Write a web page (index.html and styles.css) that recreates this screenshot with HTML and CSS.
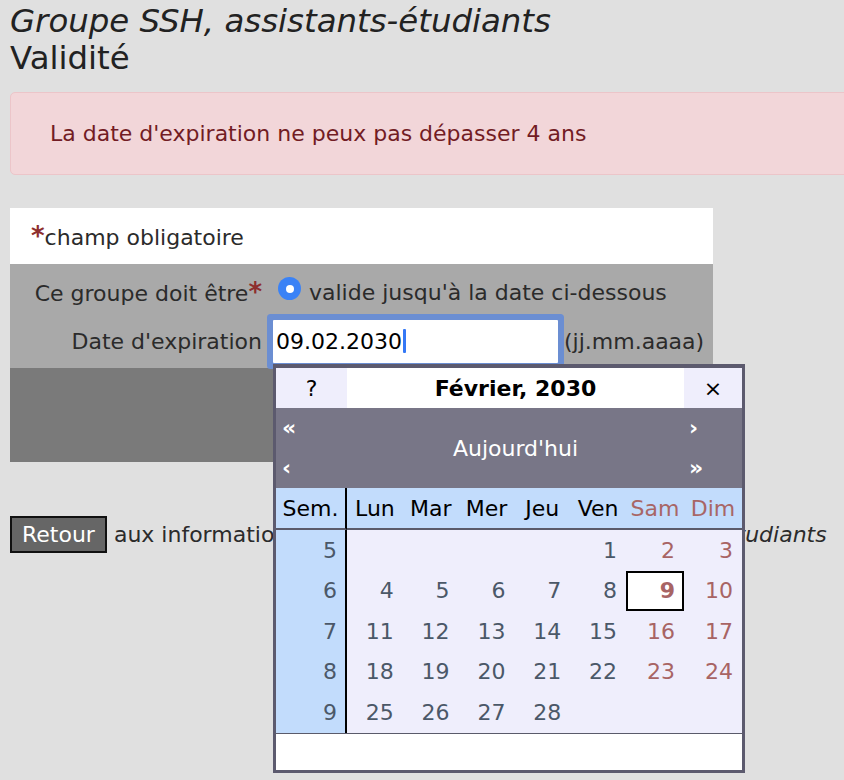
FILE: index.html
```html
<!DOCTYPE html>
<html lang="fr">
<head>
<meta charset="utf-8">
<title>Validité</title>
<link rel="stylesheet" href="styles.css">
</head>
<body>
<div class="page">
  <h1 class="title"><em>Groupe SSH, assistants-étudiants</em><br>Validité</h1>

  <div class="alert">La date d'expiration ne peux pas dépasser 4 ans</div>

  <div class="form">
    <div class="form-head"><span class="req">*</span>champ obligatoire</div>
    <div class="form-body">
      <div class="row row-1">
        <div class="label">Ce groupe doit être<span class="req">*</span></div>
        <div class="value"><span class="radio"></span>valide jusqu'à la date ci-dessous</div>
      </div>
      <div class="row row-2">
        <div class="label">Date d'expiration</div>
        <div class="value"><div class="input">09.02.2030<span class="caret"></span></div><span class="hint">(jj.mm.aaaa)</span></div>
      </div>
    </div>
    <div class="form-foot"></div>
  </div>

  <div class="back"><button class="btn">Retour</button> aux informations sur le groupe <em>Groupe SSH, assistants-étudiants</em></div>

  <div class="cal">
    <div class="c-help">?</div>
    <div class="c-title">Février, 2030</div>
    <div class="c-close">×</div>

    <div class="c-nav c-nav-l"><span>«</span><span>‹</span></div>
    <div class="c-todaybtn">Aujourd'hui</div>
    <div class="c-nav c-nav-r"><span>›</span><span>»</span></div>

    <div class="c-h c-wk">Sem.</div>
    <div class="c-h">Lun</div>
    <div class="c-h">Mar</div>
    <div class="c-h">Mer</div>
    <div class="c-h">Jeu</div>
    <div class="c-h">Ven</div>
    <div class="c-h we">Sam</div>
    <div class="c-h we">Dim</div>

    <div class="c-wn">5</div>
    <div class="c-d"></div><div class="c-d"></div><div class="c-d"></div><div class="c-d"></div>
    <div class="c-d">1</div><div class="c-d we">2</div><div class="c-d we">3</div>

    <div class="c-wn">6</div>
    <div class="c-d">4</div><div class="c-d">5</div><div class="c-d">6</div><div class="c-d">7</div>
    <div class="c-d">8</div><div class="c-d we today">9</div><div class="c-d we">10</div>

    <div class="c-wn">7</div>
    <div class="c-d">11</div><div class="c-d">12</div><div class="c-d">13</div><div class="c-d">14</div>
    <div class="c-d">15</div><div class="c-d we">16</div><div class="c-d we">17</div>

    <div class="c-wn">8</div>
    <div class="c-d">18</div><div class="c-d">19</div><div class="c-d">20</div><div class="c-d">21</div>
    <div class="c-d">22</div><div class="c-d we">23</div><div class="c-d we">24</div>

    <div class="c-wn">9</div>
    <div class="c-d">25</div><div class="c-d">26</div><div class="c-d">27</div><div class="c-d">28</div>
    <div class="c-d"></div><div class="c-d"></div><div class="c-d"></div>

    <div class="c-foot"></div>
  </div>
</div>
</body>
</html>
```

FILE: styles.css
```css
* { box-sizing: border-box; }

html, body {
  margin: 0;
  padding: 0;
  overflow: hidden;
}

body {
  background: #e0e0e0;
  font-family: "DejaVu Sans", Verdana, sans-serif;
  font-size: 22px;
  color: #2b2b2b;
}

.page {
  position: relative;
  padding: 3px 0 0 10px;
  min-height: 780px;
}

.title {
  margin: 0;
  font-size: 32.4px;
  line-height: 37px;
  font-weight: normal;
  color: #222;
}

.alert {
  margin: 15px -60px 0 0;
  height: 83px;
  display: flex;
  align-items: center;
  padding: 0 39px;
  background: #f2d6d9;
  border: 1px solid #ecc5c9;
  border-radius: 5px;
  color: #721c24;
  font-size: 22px;
}

.form {
  margin-top: 33px;
  width: 703px;
}

.form-head {
  background: #fff;
  height: 56px;
  padding: 15px 0 0 21px;
  line-height: 25px;
}

.req {
  color: #8e2e2e;
  font-weight: bold;
  font-size: 26px;
  line-height: 1;
}

.form-body { background: #a9a9a9; }

.row {
  display: grid;
  grid-template-columns: 252px 1fr;
  align-items: center;
}
.row-1 { height: 50px; padding-top: 7px; }
.row-2 { height: 54px; }

.label { text-align: right; }

.value {
  display: flex;
  align-items: center;
}

.radio {
  width: 23px;
  height: 23px;
  border-radius: 50%;
  background: #3a82f6;
  margin: 0 8px 8px 16px;
  display: flex;
  align-items: center;
  justify-content: center;
}
.radio::after {
  content: "";
  width: 8px;
  height: 8px;
  border-radius: 50%;
  background: #fff;
}

.input {
  margin-left: 11px;
  width: 285px;
  height: 43px;
  background: #fff;
  border-radius: 1px;
  box-shadow: 0 0 0 6px #6b8ed2;
  padding-left: 3px;
  display: flex;
  align-items: center;
  color: #000;
}

.caret {
  display: inline-block;
  width: 3px;
  height: 24px;
  margin-left: 1px;
  background: #3478f6;
  border-radius: 1px;
}

.hint { margin-left: 6px; }

.form-foot {
  background: #7a7a7a;
  height: 94px;
}

.back {
  margin-top: 54px;
}

.btn {
  font: inherit;
  line-height: 25px;
  height: 37px;
  padding: 4px 10px;
  background: #666;
  color: #fff;
  border: 2px solid #111;
  border-radius: 0;
}

/* calendar popup */
.cal {
  position: absolute;
  left: 273px;
  top: 364px;
  width: 472px;
  border: 3px solid #5c5a6e;
  border-top-width: 4px;
  background: #fff;
  color: #000;
  display: grid;
  grid-template-columns: 71px repeat(5, 55.8px) 58px 58px;
  grid-template-rows: 40px 80px 42px repeat(5, 40.5px) 37.5px;
}

.c-help, .c-close {
  background: #efeefc;
  display: flex;
  align-items: center;
  justify-content: center;
}

.c-title {
  grid-column: span 6;
  display: flex;
  align-items: center;
  justify-content: center;
  font-weight: bold;
  background: #fff;
}

.c-nav {
  background: #787687;
  color: #fff;
  font-weight: bold;
  display: flex;
  flex-direction: column;
}
.c-nav span { line-height: 40px; height: 40px; }
.c-nav-l { padding-left: 6px; }
.c-nav-r { padding-left: 5px; }

.c-todaybtn {
  grid-column: span 6;
  background: #787687;
  color: #fff;
  display: flex;
  align-items: center;
  justify-content: center;
}

.c-h {
  background: #c2dcfc;
  border-bottom: 2px solid #5a5a6a;
  display: flex;
  align-items: center;
  justify-content: center;
  color: #000;
}
.c-h.we { color: #a86666; }

.c-wk, .c-wn { border-right: 2px solid #000; }

.c-wn {
  background: #c2dcfc;
  display: flex;
  align-items: center;
  justify-content: flex-end;
  padding-right: 8px;
  color: #4b5868;
}

.c-d {
  background: #efeefc;
  display: flex;
  align-items: center;
  justify-content: flex-end;
  padding-right: 9px;
  color: #4b5868;
}
.c-d.we { color: #a86464; }

.c-d.today {
  background: #fff;
  border: 2px solid #000;
  padding-right: 7px;
  font-weight: bold;
}

.c-foot {
  grid-column: 1 / -1;
  background: #fff;
  border-top: 1px solid #5a5a6a;
}
```
